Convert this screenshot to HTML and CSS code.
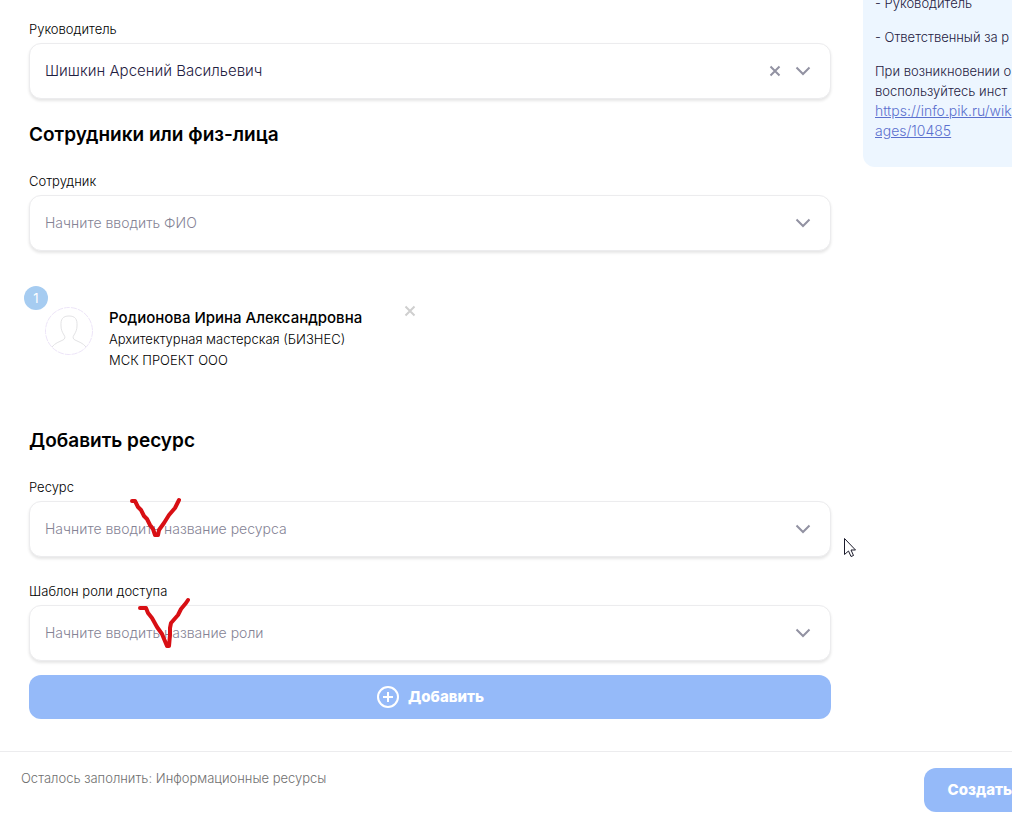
FILE: index.html
```html
<!DOCTYPE html>
<html lang="ru">
<head>
  <meta charset="UTF-8">
  <title>Заявка на доступ</title>
  <link rel="stylesheet" href="styles.css">
</head>
<body>

<div class="page">
  <div class="layout">
    <main class="form">
      <div class="field">
        <label for="manager">Руководитель</label>
        <div class="select-box">
          <input type="text" id="manager" value="Шишкин Арсений Васильевич">
          <button type="button" class="icon-btn" aria-label="Очистить">
            <svg width="12" height="12" viewBox="0 0 12 12"><path d="M1.5 1.5l9 9M10.5 1.5l-9 9"/></svg>
          </button>
          <button type="button" class="icon-btn" aria-label="Открыть список">
            <svg width="16" height="10" viewBox="0 0 16 10"><path d="M1.5 1.5L8 8l6.500-6.500"/></svg>
          </button>
        </div>
      </div>

      <h2>Сотрудники или физ-лица</h2>
      <div class="field">
        <label for="employee">Сотрудник</label>
        <div class="select-box">
          <input type="text" id="employee" placeholder="Начните вводить ФИО">
          <button type="button" class="icon-btn" aria-label="Открыть список">
            <svg width="16" height="10" viewBox="0 0 16 10"><path d="M1.5 1.5L8 8l6.500-6.500"/></svg>
          </button>
        </div>
      </div>

      <!-- Выбранный сотрудник -->
      <div class="person">
        <div class="avatar">
          <svg width="48" height="48" viewBox="0 0 48 48">
            <circle class="avatar-ring" cx="24" cy="24" r="23.500"/>
            <path d="M7 40c3-4 7-5 11-7 2-1 2.500-3 1-5-2-3-3-6-3-9-.5-7 2-10 8-10s8.500 3 8 10c0 3-1 6-3 9-1.500 2-1 4 1 5 4 2 8 3 11 7"/>
          </svg>
          <span class="badge">1</span>
        </div>
        <div class="person-info">
          <strong>Родионова Ирина Александровна</strong>
          <span>Архитектурная мастерская (БИЗНЕС)</span>
          <span>МСК ПРОЕКТ ООО</span>
        </div>
        <button type="button" class="icon-btn remove" aria-label="Удалить">
          <svg width="12" height="12" viewBox="0 0 12 12"><path d="M1.500 1.500l9 9M10.500 1.500l-9 9"/></svg>
        </button>
      </div>

      <h2>Добавить ресурс</h2>
      <div class="field">
        <label for="resource">Ресурс</label>
        <div class="select-box">
          <input type="text" id="resource" placeholder="Начните вводить название ресурса">
          <button type="button" class="icon-btn" aria-label="Открыть список">
            <svg width="16" height="10" viewBox="0 0 16 10"><path d="M1.5 1.5L8 8l6.500-6.500"/></svg>
          </button>
          <svg class="mark mark-resource" width="52" height="42" viewBox="0 0 52 42"><path d="M3 4h3l3 6 3 3 3 6 3 3 3 6 3 4 2 6h3l1-5 5-7 5-8 6-7 4-8"/></svg>
        </div>
      </div>
      <div class="field">
        <label for="role">Шаблон роли доступа</label>
        <div class="select-box">
          <input type="text" id="role" placeholder="Начните вводить название роли">
          <button type="button" class="icon-btn" aria-label="Открыть список">
            <svg width="16" height="10" viewBox="0 0 16 10"><path d="M1.5 1.5L8 8l6.500-6.500"/></svg>
          </button>
          <svg class="mark mark-role" width="54" height="52" viewBox="0 0 54 52"><path d="M3 11h6l2 5 4 5 5 9 5 7 5 12h2l1-11v-7l1-5 7-8 3-6 5-6 2-3"/></svg>
        </div>
      </div>
      <button type="button" class="btn btn-add">
        <svg width="24" height="24" viewBox="0 0 24 24"><circle cx="12" cy="12" r="10"/><path d="M12 7v10M7 12h10"/></svg>
        Добавить
      </button>
    </main>

    <aside class="hint">
      <p>- Руководитель</p>
      <p>- Ответственный за р</p>
      <p>При возникновении о<br>воспользуйтесь инст<br><a href="#">https://info.pik.ru/wik<br>ages/10485</a></p>
    </aside>
  </div>

  <footer class="footer">
    <span>Осталось заполнить: Информационные ресурсы</span>
    <button type="button" class="btn btn-create">Создать</button>
  </footer>

  <svg class="cursor" width="14" height="21" viewBox="0 0 14 21"><path d="M1.500 1.500v16l4-3.500 2.500 5.500 2.500-1-2.500-5.500h4.500z"/></svg>
</div>

</body>
</html>
```

FILE: styles.css
```css
:root {
  --color-primary: #95BAF9;
  --color-text: #000000;
  --color-value: #1F2142;
  --color-muted: #858395;
  --color-icon: #9292A2;
  --color-border: #ECECEE;
  --color-hint: #EDF6FF;
  --color-link: #5B70CE;
}

* {
  box-sizing: border-box;
}

body {
  margin: 0;
  background-color: white;
  color: var(--color-text);
  font-family: Inter, "Noto Sans", sans-serif;
  font-size: 13px;
  font-weight: 300;
  line-height: 20px;
}

.page {
  position: relative;
  min-height: 100vh;
  overflow: hidden;
}

/* боковая колонка уходит за правый край окна */
.layout {
  display: flex;
  align-items: flex-start;
  gap: 32px;
  margin-right: -120px;
  padding-left: 29px;
}

.form {
  flex: 1;
  padding: 19px 0 32px;
}

h2 {
  margin: 24px 0;
  font-size: 19px;
  font-weight: 600;
  line-height: 24px;
}

.field {
  margin-bottom: 24px;
}

label {
  display: block;
  margin-bottom: 4px;
}

.select-box {
  position: relative;
  display: flex;
  align-items: center;
  height: 56px;
  padding: 0 15px;
  border: 1px solid var(--color-border);
  border-radius: 12px;
  background-color: white;
  box-shadow: 0 2px 3px rgba(0, 0, 0, 0.1);
}

input {
  flex: 1;
  min-width: 0;
  padding: 0;
  border: none;
  outline: none;
  background: none;
  color: var(--color-value);
  font: inherit;
  font-size: 15px;
}

input:placeholder-shown {
  font-size: 14px;
}

input::placeholder {
  color: var(--color-muted);
  opacity: 1;
}

button {
  border: none;
  font: inherit;
  cursor: pointer;
}

.icon-btn {
  display: flex;
  align-items: center;
  justify-content: center;
  width: 24px;
  height: 24px;
  margin-left: 4px;
  padding: 0;
  background: none;
}

svg {
  flex: none;
  fill: none;
  stroke: var(--color-icon);
  stroke-width: 2;
}

.person {
  display: flex;
  align-items: flex-start;
  margin: 56px 0 58px 16px;
}

.avatar {
  position: relative;
  width: 48px;
  height: 48px;
}

.avatar svg {
  display: block;
  stroke: #E3E3E5;
  stroke-width: 1;
}

.avatar .avatar-ring {
  stroke: #EDE5F8;
  stroke-dasharray: 6 1;
}

.badge {
  position: absolute;
  top: -21px;
  left: -21px;
  width: 24px;
  border-radius: 12px;
  background-color: #A6CCF1;
  color: white;
  font-weight: 400;
  line-height: 24px;
  text-align: center;
}

.person-info {
  display: flex;
  flex-direction: column;
  width: 285px;
  margin-left: 16px;
  line-height: 21px;
}

.person-info strong {
  font-size: 15px;
  font-weight: 500;
  line-height: 22px;
}

.remove {
  margin-top: -8px;
}

.remove svg {
  stroke: #CFCFCF;
}

.mark {
  position: absolute;
  stroke: #D80F14;
  stroke-width: 4;
  stroke-linecap: round;
  stroke-linejoin: round;
}

.mark-resource {
  top: -5px;
  left: 99px;
}

.mark-role {
  top: -9px;
  left: 107px;
}

.btn {
  display: flex;
  align-items: center;
  justify-content: center;
  gap: 8px;
  height: 44px;
  border-radius: 12px;
  background-color: var(--color-primary);
  color: white;
  font-size: 15px;
  font-weight: 800;
}

.btn svg {
  stroke: white;
}

.btn-add {
  width: 100%;
  margin-top: -10px;
}

.hint {
  width: 269px;
  margin-top: -19px;
  padding: 12px;
  border-radius: 0 0 12px 12px;
  background-color: var(--color-hint);
  color: var(--color-value);
  white-space: nowrap;
}

.hint p {
  margin: 0 0 14px;
}

.hint a {
  color: var(--color-link);
  font-size: 14px;
}

.footer {
  display: flex;
  align-items: flex-start;
  justify-content: space-between;
  margin-right: -24px;
  padding: 16px 0 0 21px;
  border-top: 1px solid var(--color-border);
  color: #6F6F6F;
}

.btn-create {
  padding: 0 24px;
}

.cursor {
  position: absolute;
  top: 537px;
  left: 843px;
  fill: white;
  stroke: #1B1B2B;
  stroke-width: 1;
}
```
